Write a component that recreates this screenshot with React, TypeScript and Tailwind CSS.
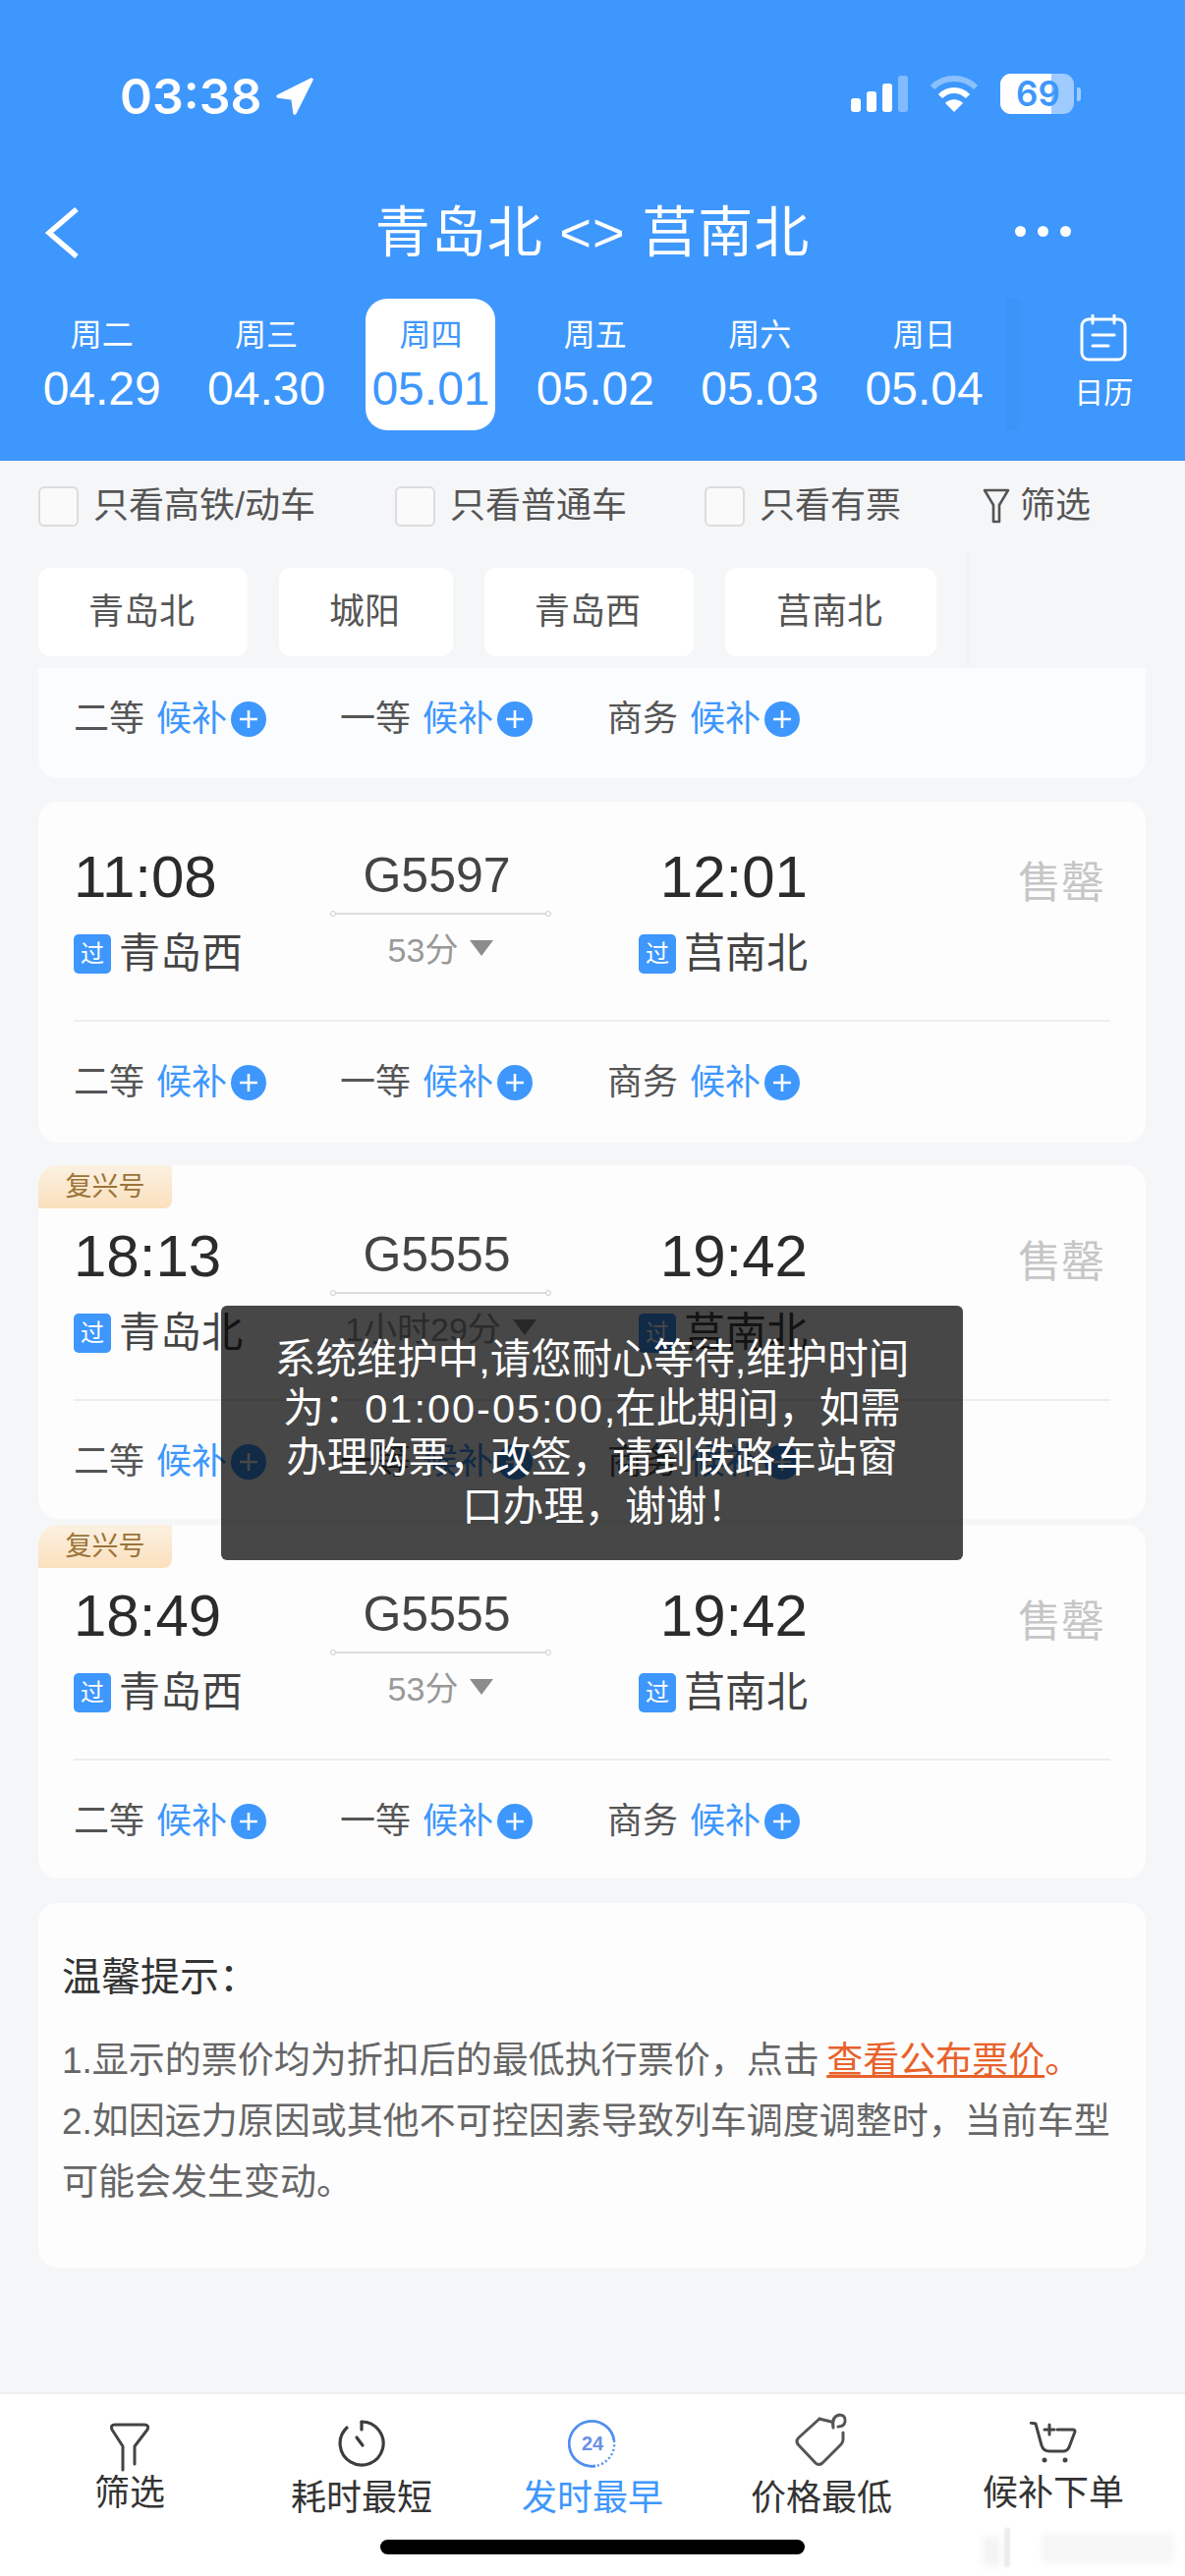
import React from 'react';

const FONT = "font-['Liberation_Sans','Noto_Sans_CJK_SC',sans-serif]";

const days = [
  { week: '周二', date: '04.29' },
  { week: '周三', date: '04.30' },
  { week: '周四', date: '05.01', active: true },
  { week: '周五', date: '05.02' },
  { week: '周六', date: '05.03' },
  { week: '周日', date: '05.04' },
];

const trains = [
  { from: '11:08', fromName: '青岛西', no: 'G5597', dur: '53分', to: '12:01', toName: '莒南北', badge: false, pt: 'pt-[47px]', bg: 'h-[347px]' },
  { from: '18:13', fromName: '青岛北', no: 'G5555', dur: '1小时29分', to: '19:42', toName: '莒南北', badge: true, pt: 'pt-[63px]', bg: 'h-[360px]' },
  { from: '18:49', fromName: '青岛西', no: 'G5555', dur: '53分', to: '19:42', toName: '莒南北', badge: true, pt: 'pt-[63px]', bg: 'h-[360px]' },
];

const PlusDot = () => (
  <svg width="36" height="36" viewBox="0 0 36 36" className="ml-[4px]">
    <circle cx="18" cy="18" r="18" fill="#3e97fc" />
    <path d="M18 9v18M9 18h18" stroke="#fff" strokeWidth="2.6" />
  </svg>
);

const Seats = () => (
  <div className="flex items-center text-[36px] leading-[40px] text-[#555]">
    {['二等', '一等', '商务'].map((seat, i) => (
      <div key={i} className="flex items-center w-[272px] first:w-[271px]">
        <span>{seat}</span>
        <span className="ml-[12px] text-[#3e97fc]">候补</span>
        <PlusDot />
      </div>
    ))}
  </div>
);

const PassTag = () => (
  <span className="w-[38px] h-[40px] rounded-[5px] bg-[#3e97fc] text-white text-[24px] flex items-center justify-center shrink-0">过</span>
);

const TrainCard = ({ t }: { t: (typeof trains)[number] }) => (
  <div className={`relative mx-[39px] w-[1127px] ${t.bg} rounded-[20px] bg-[#fdfdfe] ${t.pt} px-[36px]`}>
    {t.badge && (
      <div className="absolute left-0 top-0 w-[136px] h-[44px] rounded-tl-[20px] rounded-br-[8px] bg-gradient-to-b from-[#fbf1e2] to-[#fbe0bc] text-[#9a7438] text-[27px] flex items-center justify-center">
        复兴号
      </div>
    )}
    <div className="flex">
      <div className="w-[262px]">
        <div className="text-[60px] leading-[60px] text-[#2b2b2b]">{t.from}</div>
        <div className="flex items-center gap-[8px] mt-[22px] text-[42px] leading-[52px] text-[#444]">
          <PassTag />
          {t.fromName}
        </div>
      </div>
      <div className="w-[223px] flex flex-col items-center">
        <div className="text-[50px] leading-[56px] text-[#444] pr-[8px]">{t.no}</div>
        <div className="relative w-full h-[2px] bg-[#dcdcdc] mt-[10px]">
          <span className="absolute -left-[1px] -top-[2px] w-[6px] h-[6px] rounded-full border border-[#ccc] bg-white" />
          <span className="absolute -right-[1px] -top-[2px] w-[6px] h-[6px] rounded-full border border-[#ccc] bg-white" />
        </div>
        <div className="flex items-center gap-[12px] mt-[14px] text-[34px] leading-[44px] text-[#999]">
          {t.dur}
          <span className="w-0 h-0 border-l-[12px] border-r-[12px] border-t-[16px] border-l-transparent border-r-transparent border-t-[#8c8c8c] -mt-[4px]" />
        </div>
      </div>
      <div className="w-[262px] flex flex-col items-end">
        <div className="text-[60px] leading-[60px] text-[#2b2b2b]">{t.to}</div>
        <div className="flex items-center gap-[8px] mt-[22px] text-[42px] leading-[52px] text-[#444]">
          <PassTag />
          {t.toName}
        </div>
      </div>
      <div className="flex-1 flex justify-end pt-[8px] pr-[6px] text-[44px] leading-[56px] text-[#c6c6c6]">售罄</div>
    </div>
    <div className="h-[2px] bg-[#eeeeee] mt-[41px]" />
    <div className="mt-[42px]">
      <Seats />
    </div>
  </div>
);

const TabIcon = ({ kind }: { kind: string }) => {
  if (kind === 'filter')
    return (
      <svg width="40" height="50" viewBox="0 0 40 50" fill="none" stroke="#444" strokeWidth="3" strokeLinecap="round" strokeLinejoin="round">
        <path d="M13 48V24L2 7Q0 2 5 2H35Q40 2 38 7L25 24V42" />
      </svg>
    );
  if (kind === 'clock')
    return (
      <svg width="50" height="50" viewBox="0 0 50 50" fill="none" stroke="#3d3d3d" strokeWidth="3.2" strokeLinecap="round">
        <path d="M25 3A22 22 0 1 1 10 9" />
        <path d="M25 3v8M20 19l6 8" />
      </svg>
    );
  if (kind === 'early')
    return (
      <svg width="50" height="50" viewBox="0 0 50 50" fill="none">
        <path d="M47 22A23 23 0 1 0 28 48" stroke="#4f8ff0" strokeWidth="2.8" />
        <path d="M47 22A23 23 0 0 1 28 48" stroke="#4f8ff0" strokeWidth="2.4" strokeDasharray="2 2.5" />
        <text x="25" y="32" textAnchor="middle" fontSize="20" fontWeight="700" fill="#6a90e8" fontFamily="Liberation Sans">24</text>
      </svg>
    );
  if (kind === 'tag')
    return (
      <svg width="54" height="56" viewBox="0 0 54 56" fill="none" stroke="#555" strokeWidth="3" strokeLinejoin="round" strokeLinecap="round">
        <path d="M25 7L4 26Q0 30 4 34L21 52Q24 55 28 52L47 33Q49 31 49 28V21" />
        <path d="M25 7L37 10" />
        <path d="M39 16Q37 5 45 3Q52 3 51 10Q50 15 44 15" />
      </svg>
    );
  return (
    <svg width="48" height="44" viewBox="0 0 48 44" fill="none" stroke="#444" strokeWidth="3" strokeLinecap="round" strokeLinejoin="round">
      <path d="M1 1L6 2L12 24Q14 30 20 30H34Q38 30 40 26L46 10Q46 8 44 8H28" />
      <path d="M20 3v10M15 8h10" />
      <circle cx="15" cy="39" r="2.5" fill="#444" stroke="none" />
      <circle cx="36" cy="39" r="2.5" fill="#444" stroke="none" />
    </svg>
  );
};

const tabs = [
  { label: '筛选', icon: 'filter', w: 'w-[264px]', mt: 'mt-0', top: 'pt-[29px]' },
  { label: '耗时最短', icon: 'clock', w: 'w-[208px]', mt: 'mt-[9px]', top: 'pt-[25px]' },
  { label: '发时最早', icon: 'early', w: 'w-[262px]', mt: 'mt-[9px]', top: 'pt-[25px]', active: true },
  { label: '价格最低', icon: 'tag', w: 'w-[204px]', mt: 'mt-[10px]', top: 'pt-[18px]' },
  { label: '候补下单', icon: 'cart', w: 'w-[268px]', mt: 'mt-[7px]', top: 'pt-[28px]' },
];

export default function App() {
  return (
    <div className={`relative w-[1206px] h-[2622px] overflow-hidden bg-[#f5f6f8] flex flex-col ${FONT}`}>
      {/* header */}
      <div className="h-[469px] bg-[#3e97fc] text-white shrink-0">
        <div className="h-[154px] pt-[70px] pl-[122px] pr-[106px] flex items-start justify-between">
          <div className="flex items-center gap-[13px]">
            <span className="font-['Inter'] text-[50px] leading-[56px] font-semibold">03:38</span>
            <svg width="40" height="40" viewBox="0 0 40 40">
              <path d="M37 3L3 20l15 2 2 15z" fill="#fff" stroke="#fff" strokeWidth="3.5" strokeLinejoin="round" />
            </svg>
          </div>
          <div className="flex items-start gap-[22px] pt-[7px]">
            <div className="flex items-end gap-[6px] h-[37px]">
              <span className="w-[10px] h-[14px] rounded-[3px] bg-white" />
              <span className="w-[10px] h-[21px] rounded-[3px] bg-white" />
              <span className="w-[10px] h-[29px] rounded-[3px] bg-white" />
              <span className="w-[10px] h-[37px] rounded-[3px] bg-white/35" />
            </div>
            <svg width="50" height="37" viewBox="0 0 50 37" fill="none">
              <path d="M3 12C15 0 35 0 47 12" stroke="#fff" strokeOpacity=".4" strokeWidth="6" />
              <path d="M11 21C19 13 31 13 39 21" stroke="#fff" strokeWidth="6" />
              <path d="M25 37L16 28C21 23 29 23 34 28z" fill="#fff" />
            </svg>
            <div className="flex items-center gap-[3px] -mt-[2px]">
              <div className="relative w-[75px] h-[41px] rounded-[11px] bg-white/50 overflow-hidden">
                <div className="absolute left-0 top-0 bottom-0 w-[52px] bg-white" />
                <span className="absolute inset-0 flex items-center justify-center pl-[2px] text-[#3e97fc] font-['Inter'] text-[35px] leading-[41px] font-semibold">69</span>
              </div>
              <span className="w-[4px] h-[14px] rounded-r-[3px] bg-white/50" />
            </div>
          </div>
        </div>
        <div className="h-[150px] pt-[16px] px-[45px] flex items-center">
          <div className="w-[128px]">
            <svg width="36" height="52" viewBox="0 0 36 52" fill="none" stroke="#fff" strokeWidth="5.5">
              <path d="M33 2L5 26l28 24" />
            </svg>
          </div>
          <div className="flex-1 text-center text-[56px] leading-[64px] tracking-[1px]">青岛北 &lt;&gt; 莒南北</div>
          <div className="w-[128px] flex gap-[12px] -mt-[4px]">
            <span className="w-[11px] h-[11px] rounded-full bg-white" />
            <span className="w-[11px] h-[11px] rounded-full bg-white" />
            <span className="w-[11px] h-[11px] rounded-full bg-white" />
          </div>
        </div>
        <div className="h-[134px] flex pl-[20px]">
          {days.map((d, i) => (
            <div key={i} className="w-[167.4px] flex justify-center">
              <div className={`w-[132px] h-[134px] rounded-[22px] flex flex-col items-center pt-[18px] ${d.active ? 'bg-white text-[#3e97fc]' : ''}`}>
                <span className="text-[32px] leading-[38px]">{d.week}</span>
                <span className="text-[48px] leading-[52px] mt-[10px] whitespace-nowrap">{d.date}</span>
              </div>
            </div>
          ))}
          <div className="flex-1 pl-[16px] flex flex-col items-center pt-[16px] bg-gradient-to-r from-[#3c93f7] from-[4%] to-[#3e97fc] to-[10%]">
            <svg width="48" height="48" viewBox="0 0 48 48" fill="none" stroke="#fff" strokeWidth="3" strokeLinecap="round">
              <rect x="2" y="5" width="44" height="41" rx="7" />
              <path d="M13 1v8M35 1v8M13 21h22M13 32h16" />
            </svg>
            <span className="text-[30px] leading-[36px] mt-[14px]">日历</span>
          </div>
        </div>
      </div>

      {/* filter checkboxes */}
      <div className="h-[92px] flex items-center text-[36px] text-[#555] shrink-0">
        <div className="w-[402px] pl-[39px] flex items-center gap-[15px]">
          <span className="w-[41px] h-[41px] rounded-[6px] border-2 border-[#dcdcdc] bg-[#fafafa]" />
          只看高铁/动车
        </div>
        <div className="w-[315px] flex items-center gap-[15px]">
          <span className="w-[41px] h-[41px] rounded-[6px] border-2 border-[#dcdcdc] bg-[#fafafa]" />
          只看普通车
        </div>
        <div className="w-[283px] flex items-center gap-[15px]">
          <span className="w-[41px] h-[41px] rounded-[6px] border-2 border-[#dcdcdc] bg-[#fafafa]" />
          只看有票
        </div>
        <div className="flex items-center gap-[10px]">
          <svg width="28" height="36" viewBox="0 0 28 36" fill="none" stroke="#555" strokeWidth="2.6" strokeLinejoin="round">
            <path d="M2 2h24L17 17v17h-6V17z" />
          </svg>
          筛选
        </div>
      </div>

      {/* station chips */}
      <div className="relative h-[119px] flex gap-[32px] pl-[39px] pt-[17px] shrink-0">
        {[
          ['青岛北', 'w-[213px]'],
          ['城阳', 'w-[177px]'],
          ['青岛西', 'w-[213px]'],
          ['莒南北', 'w-[215px]'],
        ].map(([name, w], i) => (
          <div key={i} className={`${w} h-[90px] rounded-[12px] bg-white text-[36px] text-[#555] flex items-center justify-center pr-[3px]`}>
            {name}
          </div>
        ))}
        <div className="absolute left-[984px] top-0 bottom-0 w-[2px] bg-[#f1f2f4]" />
      </div>

      {/* clipped card from the list above */}
      <div className="mx-[39px] h-[112px] w-[1127px] rounded-b-[20px] bg-[#fbfcfe] pl-[36px] pt-[32px] shrink-0">
        <Seats />
      </div>

      <div className="h-[24px] shrink-0" />
      <TrainCard t={trains[0]} />
      <div className="h-[23px] shrink-0" />
      <TrainCard t={trains[1]} />
      <div className="h-[6px] shrink-0" />
      <TrainCard t={trains[2]} />
      <div className="h-[25px] shrink-0" />

      {/* tips */}
      <div className="mx-[39px] w-[1127px] h-[371px] rounded-[20px] bg-[#fdfdfe] pl-[24px] pr-[30px] pt-[50px] shrink-0">
        <div className="text-[40px] leading-[50px] text-[#333]">温馨提示：</div>
        <div className="text-[37px] leading-[62px] text-[#666] mt-[30px]">
          1.显示的票价均为折扣后的最低执行票价，点击{' '}
          <span className="text-[#e8622a] -ml-[3px]">
            <span className="underline">查看公布票价</span>。
          </span>
          <br />
          2.如因运力原因或其他不可控因素导致列车调度调整时，当前车型
          <br />
          可能会发生变动。
        </div>
      </div>

      {/* bottom tab bar */}
      <div className="relative mt-auto h-[187px] bg-white border-t-2 border-[#eeeeee] flex">
        {tabs.map((t, i) => (
          <div key={i} className={`${t.w} ${t.top} flex flex-col items-center`}>
            <TabIcon kind={t.icon} />
            <span className={`${t.mt} text-[36px] leading-[44px] whitespace-nowrap ${t.active ? 'text-[#3e97fc]' : 'text-[#333]'}`}>{t.label}</span>
          </div>
        ))}
        <div className="absolute left-[387px] top-[148px] w-[432px] h-[15px] rounded-full bg-black" />
        {/* blurred watermark */}
        <div className="absolute left-[1022px] top-[136px] w-[6px] h-[40px] bg-[#ececec] blur-[1px]" />
        <div className="absolute left-[1000px] top-[145px] w-[18px] h-[30px] bg-[#f4f4f4] blur-[3px]" />
        <div className="absolute left-[1060px] top-[142px] w-[135px] h-[30px] bg-[#f6f6f6] blur-[3px]" />
      </div>

      {/* toast */}
      <div className="absolute left-[225px] top-[1329px] w-[755px] h-[259px] rounded-[6px] bg-black/[0.72] text-white text-[41.5px] leading-[50px] text-center pt-[30px] whitespace-nowrap">
        系统维护中,请您耐心等待,维护时间
        <br />
        为：<span className="tracking-[2px]">01:00-05:00</span>,在此期间，如需
        <br />
        办理购票，改签，请到铁路车站窗
        <br />
        <span className="inline-block pl-[26px]">口办理，谢谢！</span>
      </div>
    </div>
  );
}
